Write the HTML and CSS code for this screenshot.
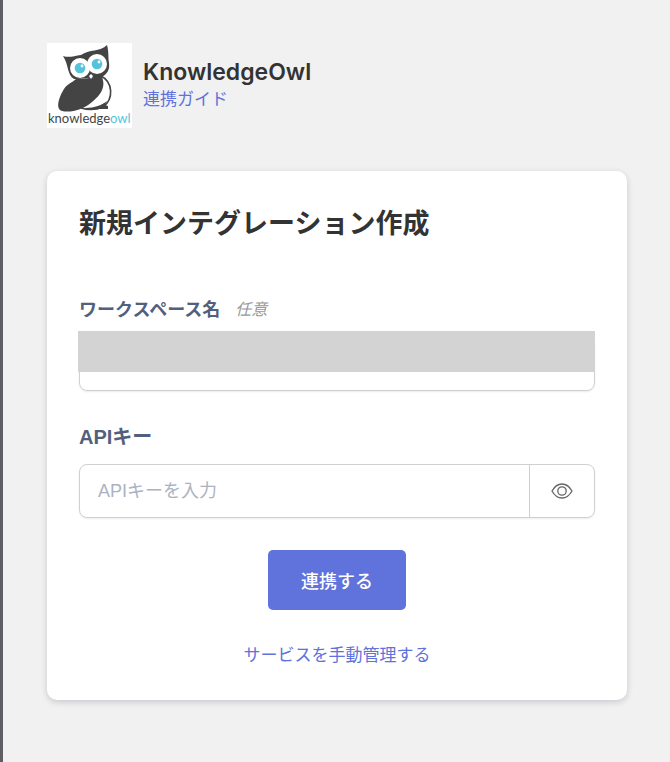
FILE: index.html
```
<!DOCTYPE html>
<html lang="ja">
<head>
    <meta charset="UTF-8">
    <meta name="viewport" content="width=device-width, initial-scale=1.0">
    <title>KnowledgeOwl</title>
    <link rel="stylesheet" href="styles.css">
</head>
<body>
    <main class="panel">
        <header class="service">
            <svg class="service-logo" viewBox="0 0 85 85" role="img" aria-label="knowledgeowl">
                <rect width="85" height="85" fill="#fff"/>
                <!-- Belly and foot -->
                <path d="M54 33C66 39 67 56 56 64C49 67 41 67 34 65" fill="#fff" stroke="#444" stroke-width="1.6"/>
                <path d="M38 65C48 65 55 62 60 58L58 62L61 63V66H40Z" fill="#444"/>
                <!-- Head -->
                <path d="M16 13C22 15 27 13 34 12C42 6 53 9 60 2C62 9 61 14 62 20C63 27 60 31 55 34L27 36C20 32 22 22 16 13Z" fill="#444"/>
                <!-- Wing -->
                <path d="M26 34C36 37 45 35 54 32C60 43 54 52 45 59C36 67 23 70 15 68C8 66 12 54 17 46C20 41 26 39 29 36Z" fill="#444"/>
                <circle cx="33" cy="25" r="10" fill="#fff"/>
                <circle cx="50" cy="21" r="10" fill="#fff"/>
                <circle cx="33" cy="25" r="5.3" fill="#55c4d9"/>
                <circle cx="50" cy="21" r="5.3" fill="#55c4d9"/>
                <circle cx="35" cy="23" r="1.4" fill="#fff"/>
                <circle cx="52" cy="19" r="1.4" fill="#fff"/>
                <path d="M42 33L44 31L46 33L44 36Z" fill="#fff"/>
                <text class="logo-text" x="1" y="80">knowledge<tspan class="logo-accent">owl</tspan></text>
            </svg>
            <div class="service-info">
                <h1>KnowledgeOwl</h1>
                <a href="#">連携ガイド</a>
            </div>
        </header>

        <form class="card">
            <h2>新規インテグレーション作成</h2>

            <div class="field">
                <div class="field-label">
                    <label for="workspace-name">ワークスペース名</label>
                    <span class="optional">任意</span>
                </div>
                <div class="input-box">
                    <input type="text" id="workspace-name">
                    <div class="mask"></div>
                </div>
            </div>

            <div class="field">
                <div class="field-label api-label">
                    <label for="api-key">APIキー</label>
                </div>
                <div class="input-box">
                    <input type="text" id="api-key" placeholder="APIキーを入力">
                    <button type="button" class="toggle" aria-label="表示">
                        <svg width="22" height="16" viewBox="0 0 22 16" fill="none" stroke="#666" stroke-width="1.3">
                            <path d="M1 8C3.5 3.5 7 1 11 1S18.5 3.5 21 8C18.5 12.5 15 15 11 15S3.5 12.5 1 8Z"/>
                            <circle cx="11" cy="8" r="4.2"/>
                        </svg>
                    </button>
                </div>
            </div>

            <div class="actions">
                <button type="submit" class="submit">連携する</button>
                <a href="#">サービスを手動管理する</a>
            </div>
        </form>
    </main>
</body>
</html>
```
FILE: styles.css
```
* {
    box-sizing: border-box;
}

body {
    margin: 0;
    min-height: 100vh;
    font-family: "Liberation Sans", "Noto Sans CJK JP", sans-serif;
    background-color: #f1f1f1;
    border-left: 3px solid #605e64;
    color: #333;
}

.panel {
    padding: 43px 43px 62px 44px;
}

h1,
h2 {
    margin: 0;
}

a {
    color: #6072db;
    font-size: 17px;
    line-height: 24px;
    text-decoration: none;
}

/* Service header */
.service {
    display: flex;
    align-items: center;
    gap: 11px;
    margin-bottom: 43px;
}

.service-logo {
    width: 85px;
    height: 85px;
}

.logo-text {
    font-family: Lato, sans-serif;
    font-size: 13px;
    fill: #444;
}

.logo-accent {
    fill: #55c4d9;
}

.service-info {
    display: flex;
    flex-direction: column;
    padding-bottom: 4px;
}

.service-info h1 {
    font-family: Inter, sans-serif;
    font-size: 23px;
    font-weight: 600;
    line-height: 32px;
}

/* Card */
.card {
    padding: 32px;
    background-color: #fff;
    border-radius: 10px;
    box-shadow: 0 2px 6px rgba(40, 40, 70, 0.2);
}

.card h2 {
    margin-bottom: 51px;
    font-size: 27px;
    line-height: 42px;
}

.field {
    margin-bottom: 32px;
}

.field-label {
    display: flex;
    align-items: center;
    gap: 15px;
    margin-bottom: 13px;
    color: #525f7f;
    font-size: 18px;
    font-weight: bold;
    line-height: 28px;
}

.api-label {
    font-size: 20px;
}

.optional {
    color: #999;
    font-size: 16px;
    font-style: italic;
    font-weight: normal;
}

.input-box {
    position: relative;
    display: flex;
    height: 54px;
    border: 1px solid #d0d0d0;
    border-radius: 8px;
    box-shadow: 0 1px 2px rgba(0, 0, 0, 0.08);
}

.input-box input {
    flex: 1;
    min-width: 0;
    padding: 0 18px;
    border: none;
    border-radius: 8px;
    background: none;
    font-family: inherit;
    font-size: 18px;
}

.input-box input::placeholder {
    color: #adb2c2;
}

.mask {
    position: absolute;
    top: -7px;
    left: -2px;
    right: -1px;
    height: 41px;
    background-color: #d3d3d3;
}

.toggle {
    display: flex;
    align-items: center;
    justify-content: center;
    width: 65px;
    border: none;
    border-left: 1px solid #d0d0d0;
    background: none;
    cursor: pointer;
}

.actions {
    display: flex;
    flex-direction: column;
    align-items: center;
    gap: 34px;
}

.submit {
    padding: 0 33px;
    height: 60px;
    border: none;
    border-radius: 5px;
    background-color: #6072db;
    color: #fff;
    font-family: inherit;
    font-size: 18px;
    font-weight: 500;
    cursor: pointer;
}
```
